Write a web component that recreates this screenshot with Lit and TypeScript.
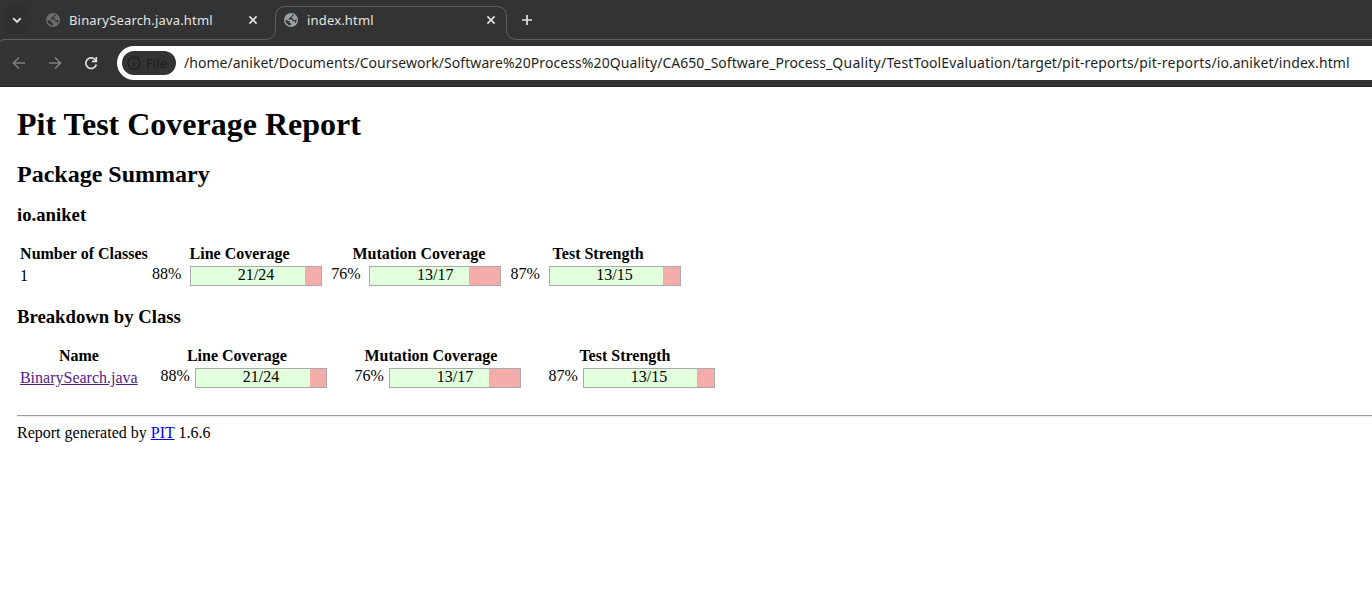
import { LitElement, html, css, svg } from "lit";
import { customElement, property } from "lit/decorators.js";
import { styleMap } from "lit/directives/style-map.js";

interface Coverage {
  title: string;
  percent: number;
  ratio: string;
}

const COVERAGE: Coverage[] = [
  { title: "Line Coverage", percent: 88, ratio: "21/24" },
  { title: "Mutation Coverage", percent: 76, ratio: "13/17" },
  { title: "Test Strength", percent: 87, ratio: "13/15" },
];

// Address segments with the tracking each one is set in, in pixels.
const URL_PARTS: [string, number][] = [
  ["/home/aniket/Documents/Coursework/", 0.03],
  ["Software%20Process%20Quality/", 0.08],
  ["CA650_Software_Process_", 0.03],
  ["Quality/", 0.25],
  ["TestToolEvaluation/", 0.14],
  ["target/", 0],
  ["pit-reports/", 0.17],
  ["pit-reports/", 0.22],
  ["io.aniket/", 0.03],
  ["index.html", 0.1],
];

const closePath = svg`<path d="M1.4 1.4 8.6 8.6M8.6 1.4 1.4 8.6" fill="none" stroke="#e3e3e3" stroke-width="1.6"/>`;

@customElement("globe-icon")
export class GlobeIcon extends LitElement {
  static styles = css`
    :host { display: block; width: 14px; height: 14px; }
    svg { display: block; }
  `;
  @property() color = "#9aa0a6";
  render() {
    return html`<svg width="14" height="14" viewBox="0 0 14 14">
      <circle cx="7" cy="7" r="7" fill=${this.color} />
      <path fill="#333" d="M8.300 1.500C8.500 2.800 7.600 3.300 6.600 3.400 6.500 4.500 6 4.900 4.900 4.900 5 6 4.600 6.400 3.900 6.600H7.200C8.200 6.600 8.700 7.300 8.700 8.200H10C10.900 8.200 11.200 8.800 11.200 9.700L10.800 10.900A5.600 5.600 0 0 0 12.500 6.200L11.400 6.900H9.700C9.200 6.900 9 6.500 9 6V5.200H7.700V4.200C7.700 3.600 8.100 3.300 8.700 3.300H9.700V2.100A5.600 5.600 0 0 0 8.300 1.500Z" />
      <path fill="#333" d="M1.400 6.800 4.600 7.900C5.500 8.300 5.800 8.800 5.800 9.400V10.100H6.800V12.600A5.600 5.600 0 0 1 1.400 6.800Z" />
    </svg>`;
  }
}

@customElement("browser-chrome")
export class BrowserChrome extends LitElement {
  static styles = css`
    :host {
      display: block;
      height: 87px;
      box-sizing: border-box;
      background: #333;
      border-bottom: 1px solid #252525;
      font-family: "Noto Sans", sans-serif;
      overflow: hidden;
    }
    svg { display: block; flex: none; }
    .strip { display: grid; height: 46px; }
    .outline, .tabs { grid-area: 1 / 1; }
    .tabs { display: flex; align-items: center; height: 40px; padding-left: 3px; }
    .search {
      display: flex; align-items: center; justify-content: center;
      width: 28px; height: 28px; border-radius: 9px; background: #303030;
    }
    .tab {
      display: flex; align-items: center; box-sizing: border-box; width: 212px;
      font-size: 13px; line-height: 18px; color: #e3e3e3;
    }
    .first { margin-left: 15px; }
    .second { margin-left: 26px; }
    .name { flex: 1; margin-left: 9px; white-space: nowrap; letter-spacing: 0.17px; }
    .plus { margin-left: 25px; }
    .toolbar { display: flex; align-items: center; height: 34px; }
    .back { margin-left: 12px; }
    .forward { margin-left: 22px; }
    .reload { margin-left: 22px; }
    .omnibox {
      flex: 1; display: flex; align-items: center; height: 34px;
      box-sizing: border-box; margin-left: 19px; padding-left: 5px;
      background: #fff; border-radius: 17px 0 0 17px;
    }
    .chip {
      display: flex; align-items: center; gap: 5px; width: 54px; height: 24px;
      box-sizing: border-box; padding-left: 5px; border-radius: 12px;
      background: #333; color: #1f1f1f; font-size: 13px; font-weight: 500;
    }
    .url { margin-left: 8px; font-size: 14px; line-height: 20px; color: #1f1f1f; white-space: nowrap; }
  `;
  render() {
    return html`
      <div class="strip">
        <svg class="outline" width="1372" height="46" viewBox="0 0 1372 46">
          <path d="M0 41.5Q1.5 39.5 5 39.5H265Q275.500 39.500 275.500 29V17Q275.500 6.500 286 6.500H496.500Q506.500 6.500 506.500 17V29Q506.500 39.500 517 39.500H1372" fill="none" stroke="#606060" />
        </svg>
        <div class="tabs">
          <div class="search">
            <svg width="10" height="7" viewBox="0 0 10 7"><path d="M1.2 1.2 5 5 8.800 1.200" fill="none" stroke="#e3e3e3" stroke-width="1.8" /></svg>
          </div>
          <div class="tab first">
            <globe-icon color="#6a6d70"></globe-icon>
            <span class="name">BinarySearch.java.html</span>
            <svg width="10" height="10" viewBox="0 0 10 10">${closePath}</svg>
          </div>
          <div class="tab second">
            <globe-icon></globe-icon>
            <span class="name">index.html</span>
            <svg width="10" height="10" viewBox="0 0 10 10">${closePath}</svg>
          </div>
          <svg class="plus" width="12" height="12" viewBox="0 0 12 12"><path d="M6 1V11M1 6H11" fill="none" stroke="#e3e3e3" stroke-width="1.7" /></svg>
        </div>
      </div>
      <div class="toolbar">
        <svg class="back" width="14" height="14" viewBox="0 0 14 14"><path d="M13 7H2M7 1.500 1.500 7 7 12.500" fill="none" stroke="#7e7e7e" stroke-width="1.6" /></svg>
        <svg class="forward" width="14" height="14" viewBox="0 0 14 14"><path d="M1 7H12M7 1.500 12.500 7 7 12.500" fill="none" stroke="#7e7e7e" stroke-width="1.6" /></svg>
        <svg class="reload" width="14" height="14" viewBox="0 0 14 14">
          <path d="M12.300 8.500A5.300 5.300 0 1 1 11 3.500L12.400 5" fill="none" stroke="#e3e3e3" stroke-width="1.7" />
          <path d="M12.300 1V5.300H8" fill="none" stroke="#e3e3e3" stroke-width="1.7" />
        </svg>
        <div class="omnibox">
          <div class="chip">
            <svg width="14" height="14" viewBox="0 0 14 14"><circle cx="7" cy="7" r="6" fill="none" stroke="#1f1f1f" stroke-width="1.400" /><path d="M7 6.200V10.300M7 3.600V5" stroke="#1f1f1f" stroke-width="1.400" /></svg>
            <span>File</span>
          </div>
          <span class="url">${URL_PARTS.map(
            ([text, tracking]) => html`<span style=${styleMap({ letterSpacing: `${tracking}px` })}>${text}</span>`
          )}</span>
        </div>
      </div>
    `;
  }
}

@customElement("coverage-bar")
export class CoverageBar extends LitElement {
  static styles = css`
    :host {
      display: grid; box-sizing: border-box; width: 132px; height: 20px;
      border: 1px solid #aaa; background: #f4adab;
      font-size: 16px; line-height: 16px;
    }
    .fill, .legend { grid-area: 1 / 1; }
    .fill { background: #e2ffde; }
    .legend { text-align: center; }
  `;
  @property({ type: Number }) percent = 0;
  @property() ratio = "";
  render() {
    return html`
      <div class="fill" style=${styleMap({ width: `${this.percent}%` })}></div>
      <div class="legend">${this.ratio}</div>
    `;
  }
}

@customElement("app-root")
export class AppRoot extends LitElement {
  static styles = css`
    :host {
      display: block; height: 601px; overflow: hidden; background: #fff; color: #000;
      font-family: "Liberation Serif", serif; font-size: 16px; line-height: 18px;
    }
    .report { padding: 19px 0 0 17px; }
    h1, h2, h3 { margin: 0; font-weight: bold; }
    h1 { font-size: 32px; line-height: 36px; }
    h2 { font-size: 24px; line-height: 27px; margin-top: 19px; }
    h3 { font-size: 18.72px; line-height: 21px; margin-top: 16px; }
    .table {
      display: grid; column-gap: 4px; row-gap: 3px; padding-left: 2.95px;
      margin-top: 20px; justify-content: start;
    }
    .summary { grid-template-columns: 128px repeat(3, 175.3px); }
    .classes { grid-template-columns: 118px repeat(3, 190px); }
    .head { font-weight: bold; text-align: center; white-space: nowrap; }
    .label { padding-top: 1px; }
    .cell { display: flex; height: 20px; }
    .percent { line-height: 16px; box-sizing: border-box; }
    .summary .percent { width: 38px; }
    .classes .percent { width: 53px; padding-right: 5px; text-align: right; }
    .breakdown { margin-top: 20px; }
    .visited { color: #551a8b; }
    .link { color: #0000ee; }
    .rule { height: 1px; margin-top: 27px; background: #9a9a9a; border-bottom: 1px solid #eee; }
    .footer { margin-top: 7px; }
  `;

  private table(kind: string, title: string, label: unknown) {
    return html`
      <div class="table ${kind}">
        <div class="head">${title}</div>
        ${COVERAGE.map((c) => html`<div class="head">${c.title}</div>`)}
        <div class="label">${label}</div>
        ${COVERAGE.map(
          (c) => html`<div class="cell">
            <span class="percent">${c.percent}%</span>
            <coverage-bar .percent=${c.percent} .ratio=${c.ratio}></coverage-bar>
          </div>`
        )}
      </div>
    `;
  }

  render() {
    return html`
      <browser-chrome></browser-chrome>
      <main class="report">
        <h1>Pit Test Coverage Report</h1>
        <h2>Package Summary</h2>
        <h3>io.aniket</h3>
        ${this.table("summary", "Number of Classes", "1")}
        <h3 class="breakdown">Breakdown by Class</h3>
        ${this.table("classes", "Name", html`<a class="visited" href="#">BinarySearch.java</a>`)}
        <div class="rule"></div>
        <div class="footer">Report generated by <a class="link" href="#">PIT</a> 1.6.6</div>
      </main>
    `;
  }
}
